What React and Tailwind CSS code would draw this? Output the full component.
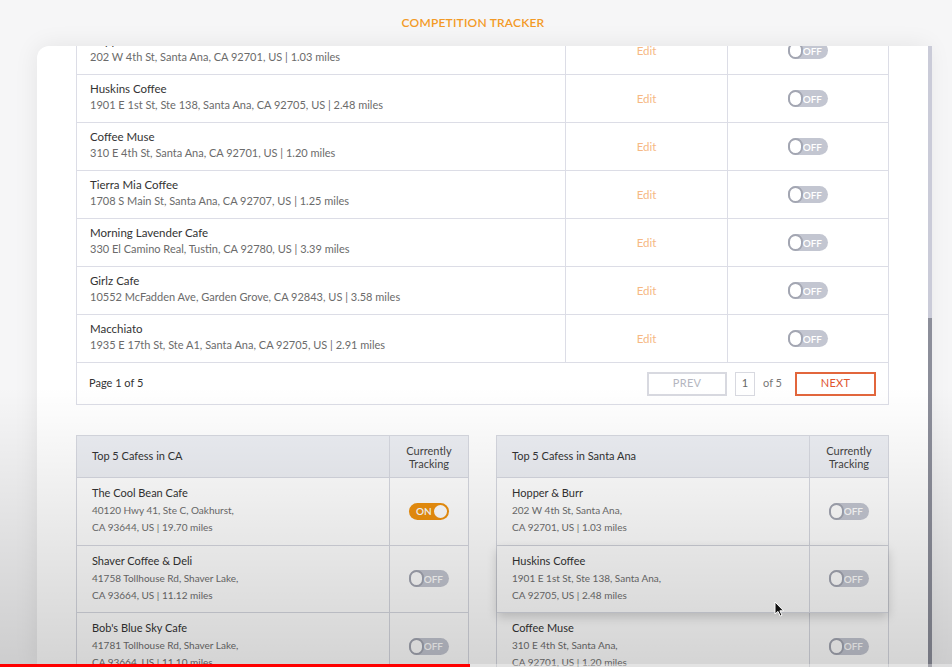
import React from 'react';

const font = { fontFamily: 'Lato, "Open Sans", sans-serif' };

const tracked = [
  { name: 'Hopper & Burr', addr: '202 W 4th St, Santa Ana, CA 92701, US | 1.03 miles' },
  { name: 'Huskins Coffee', addr: '1901 E 1st St, Ste 138, Santa Ana, CA 92705, US | 2.48 miles' },
  { name: 'Coffee Muse', addr: '310 E 4th St, Santa Ana, CA 92701, US | 1.20 miles' },
  { name: 'Tierra Mia Coffee', addr: '1708 S Main St, Santa Ana, CA 92707, US | 1.25 miles' },
  { name: 'Morning Lavender Cafe', addr: '330 El Camino Real, Tustin, CA 92780, US | 3.39 miles' },
  { name: 'Girlz Cafe', addr: '10552 McFadden Ave, Garden Grove, CA 92843, US | 3.58 miles' },
  { name: 'Macchiato', addr: '1935 E 17th St, Ste A1, Santa Ana, CA 92705, US | 2.91 miles' },
];

const topCA = [
  { name: 'The Cool Bean Cafe', l1: '40120 Hwy 41, Ste C, Oakhurst,', l2: 'CA 93644, US | 19.70 miles', on: true },
  { name: 'Shaver Coffee & Deli', l1: '41758 Tollhouse Rd, Shaver Lake,', l2: 'CA 93664, US | 11.12 miles' },
  { name: "Bob's Blue Sky Cafe", l1: '41781 Tollhouse Rd, Shaver Lake,', l2: 'CA 93664, US | 11.10 miles' },
];

const topSA = [
  { name: 'Hopper & Burr', l1: '202 W 4th St, Santa Ana,', l2: 'CA 92701, US | 1.03 miles' },
  { name: 'Huskins Coffee', l1: '1901 E 1st St, Ste 138, Santa Ana,', l2: 'CA 92705, US | 2.48 miles', hover: true },
  { name: 'Coffee Muse', l1: '310 E 4th St, Santa Ana,', l2: 'CA 92701, US | 1.20 miles' },
];

const Toggle = ({ on }) =>
  on ? (
    <div className="flex items-center justify-between w-[40px] h-[17px] rounded-full bg-[#f0920e] pl-[7px] pr-[2px]">
      <span className="text-[10px] leading-none text-white font-semibold">ON</span>
      <span className="w-[13px] h-[13px] rounded-full bg-white" />
    </div>
  ) : (
    <div className="flex items-center justify-between w-[40px] h-[17px] rounded-full bg-[#c3c6d1] pr-[6px]">
      <span className="w-[17px] h-[17px] rounded-full bg-white border-2 border-[#a3a6b2]" />
      <span className="text-[10px] leading-none text-white font-semibold">OFF</span>
    </div>
  );

const SmallTable = ({ title, rows }) => (
  <div className="w-[393px] border border-[#d6d8e0]">
    <div className="flex h-[42px] bg-[#eceef3] border-b border-[#d6d8e0]">
      <div className="flex-1 flex items-center pl-[15px] text-[11px] text-[#333]">{title}</div>
      <div className="w-[79px] border-l border-[#d6d8e0] flex flex-col items-center justify-center text-[11px] leading-[13px] text-[#444]">
        <span>Currently</span>
        <span>Tracking</span>
      </div>
    </div>
    {rows.map((r) => (
      <div
        key={r.name}
        className={
          'flex h-[67.5px] border-b border-[#d6d8e0] ' +
          (r.hover ? 'relative bg-[#fdfdfd] shadow-[0_4px_10px_rgba(0,0,0,0.18)]' : 'bg-white')
        }
      >
        <div className="flex-1 pl-[15px] pt-[6px]">
          <div className="text-[11px] leading-[18px] text-[#333]">{r.name}</div>
          <div className="text-[10px] leading-[17px] text-[#6e6e6e]">{r.l1}</div>
          <div className="text-[10px] leading-[17px] text-[#6e6e6e]">{r.l2}</div>
        </div>
        <div className="w-[79px] border-l border-[#d6d8e0] flex items-center justify-center">
          <Toggle on={r.on} />
        </div>
      </div>
    ))}
  </div>
);

export default function App() {
  return (
    <div className="relative h-[667px] w-full overflow-hidden bg-[#f6f6f7] flex flex-col" style={font}>
      <div className="h-[46px] flex items-center justify-center shrink-0">
        <span className="text-[12px] font-semibold tracking-[0.2px] text-[#f39a26] -ml-[6px]">COMPETITION TRACKER</span>
      </div>

      <div className="flex flex-1 min-h-0 pl-[37px] pr-[20px]">
        <div className="flex-1 bg-white rounded-tl-xl overflow-hidden shadow-[0_0_24px_rgba(0,0,0,0.08)]">
          <div className="-mt-[19px] px-[39px]">
            {/* tracked list */}
            <div className="border border-[#dcdde6] border-t-0">
              {tracked.map((r) => (
                <div key={r.name} className="flex h-[48px] border-b border-[#dcdde6]">
                  <div className="w-[488px] pl-[13px] pt-[6px]">
                    <div className="text-[11.5px] leading-[16px] text-[#333]">{r.name}</div>
                    <div className="text-[11px] leading-[16px] text-[#6b6b6b]">{r.addr}</div>
                  </div>
                  <div className="w-[162px] border-l border-[#dcdde6] flex items-center justify-center text-[11.5px] text-[#f6b884]">
                    Edit
                  </div>
                  <div className="flex-1 border-l border-[#dcdde6] flex items-center justify-center">
                    <Toggle />
                  </div>
                </div>
              ))}
              <div className="flex items-center h-[41px] pl-[12px] pr-[12px]">
                <span className="text-[11px] text-[#333]">Page 1 of 5</span>
                <div className="ml-auto flex items-center">
                  <button className="w-[80px] h-[24px] border-2 border-[#d8d9e0] text-[11px] tracking-wide text-[#b4b6c0]">PREV</button>
                  <span className="ml-[8px] w-[20px] h-[24px] border border-[#d8d9e0] flex items-center justify-center text-[11px] text-[#666]">1</span>
                  <span className="ml-[8px] text-[11px] text-[#777]">of 5</span>
                  <button className="ml-[13px] w-[81px] h-[24px] border-2 border-[#e2663c] text-[11px] tracking-wide text-[#e0552e]">NEXT</button>
                </div>
              </div>
            </div>

            {/* top 5 tables */}
            <div className="flex justify-between mt-[30px]">
              <SmallTable title="Top 5 Cafess in CA" rows={topCA} />
              <SmallTable title="Top 5 Cafess in Santa Ana" rows={topSA} />
            </div>
          </div>
        </div>
        <div className="w-[4px] flex flex-col">
          <div className="h-[272px] bg-[#cacbd8]" />
          <div className="flex-1 bg-[#8c8e9a]" />
        </div>
      </div>

      {/* video vignette */}
      <div className="pointer-events-none absolute inset-0 bg-[linear-gradient(to_bottom,rgba(0,0,0,0)_0%,rgba(0,0,0,0)_58%,rgba(0,0,0,0.17)_100%)]" />

      {/* cursor */}
      <svg className="absolute left-[774px] top-[601px]" width="11" height="16" viewBox="0 0 11 16">
        <path d="M1 1 L1 13 L4 10.4 L6.2 15 L8 14.2 L5.9 9.8 L9.6 9.8 Z" fill="#111" stroke="#fff" strokeWidth="1" />
      </svg>

      {/* progress bar */}
      <div className="absolute bottom-0 left-0 right-0 h-[3px] flex">
        <div className="w-[470px] bg-[#f00]" />
        <div className="flex-1 bg-[rgba(255,255,255,0.35)]" />
      </div>
    </div>
  );
}
